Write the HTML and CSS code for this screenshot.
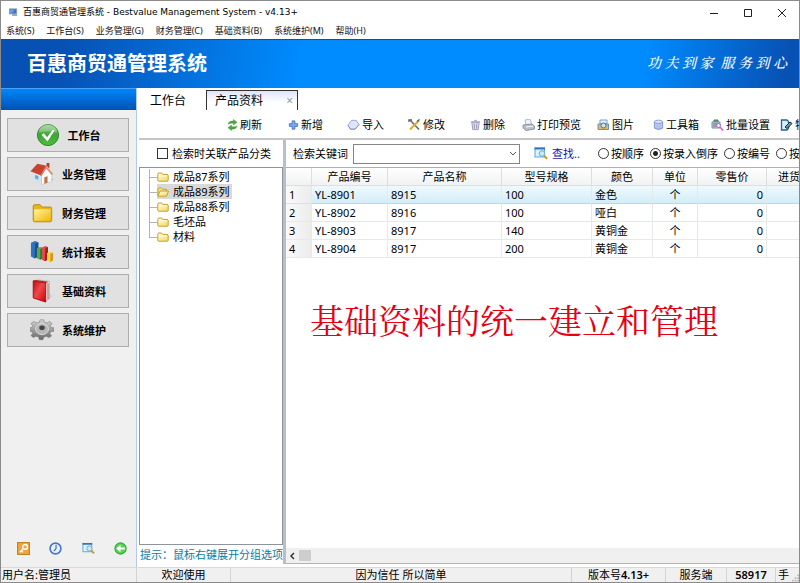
FILE: index.html
```html
<!DOCTYPE html>
<html lang="zh-CN">
<head>
<meta charset="utf-8">
<title>百惠商贸通管理系统</title>
<link rel="stylesheet" href="styles.css">
</head>
<body>
<svg class="defs" width="0" height="0" aria-hidden="true">
  <defs>
    <linearGradient id="yellow" x1="0" y1="0" x2="1" y2="1"><stop offset="0" stop-color="#fff2a0"/><stop offset="1" stop-color="#f2b705"/></linearGradient>
    <linearGradient id="pale" x1="0" y1="0" x2="1" y2="1"><stop offset="0" stop-color="#fffbe0"/><stop offset="1" stop-color="#f5d95c"/></linearGradient>
    <linearGradient id="green" x1="0" y1="0" x2="0" y2="1"><stop offset="0" stop-color="#8fce86"/><stop offset=".5" stop-color="#3fa535"/><stop offset="1" stop-color="#4cc03c"/></linearGradient>
    <linearGradient id="red" x1="0" y1="0" x2="1" y2="1"><stop offset="0" stop-color="#b80f12"/><stop offset=".45" stop-color="#f0484a"/><stop offset="1" stop-color="#cc0006"/></linearGradient>
    <linearGradient id="steel" x1="0" y1="0" x2="0" y2="1"><stop offset="0" stop-color="#d2d2d2"/><stop offset="1" stop-color="#686868"/></linearGradient>
    <symbol id="folder" viewBox="0 0 12 10"><path d="M.8 8.2V2.2Q.8 1 2 1h2.6l1.2 1.4H10q1.2 0 1.2 1.2v4.6q0 1-1 1H1.800q-1 0-1-1z" fill="url(#pale)" stroke="#c4a02c"/><path d="M2 4h8" stroke="#fffbd5"/></symbol>
    <symbol id="folder-open" viewBox="0 0 12 10"><path d="M1 9V2.200Q1 1 2 1h2.400l1.200 1.200H9.500V4" fill="#f9e48c" stroke="#c4a02c"/><path d="M.8 9.200 3 4h8.500L9.600 9.200z" fill="url(#pale)" stroke="#c4a02c"/></symbol>
    <symbol id="finder" viewBox="0 0 14 13"><rect x="1" y="1" width="9.500" height="9" fill="#d9f3fb" stroke="#5fa6d4"/><path d="M.5 1.500h10.500" stroke="#3476bd" stroke-width="2"/><circle cx="8" cy="6.500" r="2.800" fill="#c5ebf6" stroke="#78a9c4"/><path d="m10.200 8.800 2.800 3" stroke="#c9973b" stroke-width="2"/></symbol>
  </defs>
</svg>
<div class="window">
  <header class="titlebar">
    <svg class="app-icon" viewBox="0 0 10 9"><rect x=".5" y=".5" width="8" height="5.500" fill="#3f73c4" stroke="#7f9cc9"/><path d="M1 2 5 1v3L1 5z" fill="#71a0e8"/><path d="M3 8h6.500l-1-1.500H4z" fill="#87919e"/></svg>
    <h1>百惠商贸通管理系统 - Bestvalue Management System - v4.13+</h1>
    <div class="controls">
      <button type="button" aria-label="最小化"><svg viewBox="0 0 10 10"><path d="M1 5.500h8"/></svg></button>
      <button type="button" aria-label="最大化"><svg viewBox="0 0 10 10"><path d="M1.500 1.500h7v7h-7z"/></svg></button>
      <button type="button" aria-label="关闭"><svg viewBox="0 0 10 10"><path d="m1 1 8 8M9 1 1 9"/></svg></button>
    </div>
  </header>
  <nav class="menu">
    <a href="#">系统(S)</a><a href="#">工作台(S)</a><a href="#">业务管理(G)</a><a href="#">财务管理(C)</a><a href="#">基础资料(B)</a><a href="#">系统维护(M)</a><a href="#">帮助(H)</a>
  </nav>
  <div class="banner">
    <strong>百惠商贸通管理系统</strong>
    <em>功 夫 到 家 &nbsp;服 务 到 心</em>
  </div>
  <div class="main">
    <aside class="sidebar">
      <div class="side-head"></div>
      <div class="side-nav">
        <button type="button"><svg viewBox="0 0 26 26"><circle cx="13" cy="13" r="11.500" fill="url(#green)" stroke="#2c8429"/><path d="M3 10a10 9 0 0 1 20 0q-9-2-20 0z" fill="#fff" opacity=".25"/><path d="m6 13 2.500-2 3.500 4.500L18.500 7l1.500 1-7.500 12z" fill="#fff"/></svg>工作台</button>
        <button type="button"><svg viewBox="0 0 26 26"><path d="M5 20q9 6 20-1l-6-4z" fill="#7cb75a"/><path d="m3 10 9.500 4v10.500L3 20z" fill="#d3e3ef"/><path d="m12.500 14 5.500-8 5.500 7v8l-11 3.500z" fill="#f6fafd" stroke="#adc0ce" stroke-width=".6"/><path d="M.5 10 8 2l10 2-6 10.500z" fill="#c8422f"/><path d="m17.500 4 7.500 9-1.500 1.200L17.500 7l-5 8.500-1.300-1z" fill="#e98363"/><path d="M18 4V1h3v6z" fill="#a93d2e"/><path d="m15.500 16.500 3.500-1v7l-3.500 1z" fill="#c57044"/><path d="m5.500 14 3.500 1.200v4L5.500 18z" fill="#6fa6ce"/></svg>业务管理</button>
        <button type="button"><svg viewBox="0 0 26 26"><path d="M3.500 21V5.500q0-1.500 1.500-1.500h6l2 2.500h9q1.500 0 1.500 1.500v13q0 1.500-1.500 1.500H5q-1.500 0-1.500-1.500z" fill="#e5b616" stroke="#b98a12"/><path d="M4.500 9h18v12.500h-18z" fill="url(#yellow)"/></svg>财务管理</button>
        <button type="button"><svg viewBox="0 0 26 26"><path d="M1 3 5.500 1 9 2.500V18l-4 2-4-2z" fill="#2f73bd"/><path d="M5.500 4 9 2.500V18l-4 2z" fill="#174f94"/><path d="m7.500 9 3.500-1.500 3 1V20l-3 1.500L7.500 20z" fill="#55aa46"/><path d="m11 10 3-1.500V20l-3 1.500z" fill="#2b7d31"/><path d="m13 8 3.500-1.500 3 1V21L16 23l-3-1.500z" fill="#df4d49"/><path d="m16.500 9 3-1.500V21L16 23z" fill="#a91e25"/><path d="m18.500 14 3.500-1.500 3 1.200V22L21.500 24l-3-1.500z" fill="#fbd63c"/><path d="m22 15 3-1.300V22l-3 2z" fill="#d99714"/></svg>统计报表</button>
        <button type="button"><svg viewBox="0 0 26 26"><path d="m17 25 7-6-3-4z" fill="#d0d0d0"/><path d="m4 2 4-1 13 1.500V21l-4 3z" fill="#eee" stroke="#999" stroke-width=".6"/><path d="m3.500 2 13.500 2.500V25L3.500 20.500z" fill="url(#red)" stroke="#a30b0d"/><path d="m3.500 2 3-1L20 3l-3 1.500z" fill="#c41c20"/><path d="M19.500 4.500V22" stroke="#a5504d"/></svg>基础资料</button>
        <button type="button"><svg viewBox="0 0 26 26"><path d="m10 4 1-3 4 0 .5 3 3 .8L21 3l3 2.500-2 2.500 1 2 3 .5v4l-3.500.5-1 2.500 2 2.500-3 2-3-1.500-2.500 1-1 3h-4l-.5-3-3-1-3 1.500-2.500-2.500 2-2.500-1-2-3-.5v-4l3-.5 1-2-2-2.500 3-2.500 3 1.500z" transform="matrix(1 0 0 .92 0 1)" fill="url(#steel)" stroke="#777" stroke-width=".6"/><ellipse cx="13" cy="12" rx="7" ry="6" fill="#b5b5b5" stroke="#dedede"/><ellipse cx="13" cy="10.500" rx="3" ry="2.500" fill="#444"/></svg>系统维护</button>
      </div>
      <div class="side-tools">
        <button type="button" aria-label="密钥"><svg viewBox="0 0 12 12"><rect x=".5" y=".5" width="11" height="11" fill="#eda63b" stroke="#c58221"/><circle cx="7.500" cy="4.500" r="2.200" fill="none" stroke="#fff" stroke-width="1.300"/><path d="M6 6 2.500 9.500M4 8l1.500 1.500" stroke="#fff" stroke-width="1.300"/></svg></button>
        <button type="button" aria-label="时钟"><svg viewBox="0 0 12 12"><circle cx="6" cy="6" r="5" fill="#e9f2ff" stroke="#4778c7" stroke-width="1.500"/><path d="M6.500 2.500V6L4.500 8.500" fill="none" stroke="#2e64bb"/></svg></button>
        <button type="button" aria-label="查找"><svg viewBox="0 0 14 13"><use href="#finder"/></svg></button>
        <button type="button" aria-label="返回"><svg viewBox="0 0 12 12"><circle cx="6" cy="6" r="5.200" fill="#5bd05b" stroke="#2fae39"/><path d="m2 6 4-3.500V5h4v2H6v2.500z" fill="#fff"/></svg></button>
      </div>
    </aside>
    <section class="content">
      <div class="tabs">
        <button type="button" class="tab">工作台</button>
        <div class="tab active"><button type="button">产品资料</button><button type="button" class="close" aria-label="关闭标签">×</button></div>
      </div>
      <div class="toolbar">
        <button type="button"><svg viewBox="0 0 12 12"><path d="M1 5q1-3.500 5-3.500h1V0l4 3-4 3V4H5.500Q3 4 1 5zM11 7q-1 3.500-5 3.500H5V12L1 9l4-3v2h1.500Q9 8 11 7z" fill="#45ad38" stroke="#2f8d2b" stroke-width=".4"/></svg>刷新</button>
        <button type="button"><svg viewBox="0 0 12 12"><path d="M4.500 1.500h3v3h3v3h-3v3h-3v-3h-3v-3h3z" fill="#79a9ed" stroke="#4579c8"/></svg>新增</button>
        <button type="button"><svg class="wide" viewBox="0 0 14 12"><path d="m1 6 4-5h5l3 4.500-4.500 5h-5z" fill="#dfe5fb" stroke="#9aa5d5"/><path d="m1 6.500 3 4h5l4-5" fill="none" stroke="#8992c1"/></svg>导入</button>
        <button type="button"><svg class="wide" viewBox="0 0 13 12"><path d="m2 1 9 9.500" stroke="#67736f" stroke-width="1.700"/><path d="m11 1.500-9 9" stroke="#e2a736" stroke-width="2"/><path d="M1 3V1h3M9 2.500l2.500-2" fill="none" stroke="#596363" stroke-width="1.400"/></svg>修改</button>
        <button type="button"><svg viewBox="0 0 12 12"><path d="M2 3h8l-1 8H3z" fill="#d9d9ed" stroke="#9797b6"/><path d="M1 2.500h10M4.500 1h3M4.500 4.500 5 10M7.500 4.500 7 10" stroke="#9c9cbc"/></svg>删除</button>
        <button type="button"><svg class="wide" viewBox="0 0 13 12"><path d="m4 6-1-5 5-1 2 6z" fill="#e9f2ff" stroke="#90a6bd" stroke-width=".7"/><path d="m1 6 9-1 2.500 2v3L4 11.500 1 9z" fill="#b9bfca" stroke="#7f8591" stroke-width=".8"/><path d="m4 8 7-.8" stroke="#f7f7f7"/></svg>打印预览</button>
        <button type="button"><svg class="wide" viewBox="0 0 13 12"><path d="M3 1h7v4H3z" fill="#e4eefc" stroke="#7a9dcf"/><path d="M1 5h10.500v5.500H1z" fill="#e8b758" stroke="#668fc8"/><circle cx="6.500" cy="6.500" r="2.500" fill="#bfe7fa" stroke="#357bbb"/></svg>图片</button>
        <button type="button"><svg viewBox="0 0 12 12"><path d="M1.500 2.500v7q4.500 3 9 0v-7" fill="#a7b7f2" stroke="#8092d4"/><ellipse cx="6" cy="2.500" rx="4.500" ry="1.800" fill="#dfe6ff" stroke="#8092d4"/><path d="M2 5q4 2 8 0M2 7.500q4 2 8 0" fill="none" stroke="#c9d3fb"/></svg>工具箱</button>
        <button type="button"><svg class="wide" viewBox="0 0 13 12"><path d="M1 3h8v6H1z" fill="#bfd1da" stroke="#76929f"/><path d="M3 3V1h4v2" fill="#599f74" stroke="#557f66"/><path d="M2 5h6M2 7h6" stroke="#668"/><circle cx="7.500" cy="6.500" r="2" fill="#f7e9ff" stroke="#a56cc6"/><path d="m9 8 3 3.500" stroke="#e06bb5" stroke-width="1.800"/></svg>批量设置</button>
        <button type="button"><svg class="wide" viewBox="0 0 13 12"><path d="M1.500 1H7q2 1 2 5t-2 5H1.500z" fill="#d5f0ff" stroke="#256092" stroke-width="1.300"/><path d="m5 8 5-5 2 1.500-5 5z" fill="#69a1b1" stroke="#222"/></svg>特性</button>
      </div>
      <div class="split">
        <section class="category">
          <label class="link-check"><input type="checkbox">检索时关联产品分类</label>
          <ul class="tree">
            <li><button type="button"><svg viewBox="0 0 12 10"><use href="#folder"/></svg><span>成品87系列</span></button></li>
            <li><button type="button" class="chosen"><svg viewBox="0 0 12 10"><use href="#folder-open"/></svg><span>成品89系列</span></button></li>
            <li><button type="button"><svg viewBox="0 0 12 10"><use href="#folder"/></svg><span>成品88系列</span></button></li>
            <li><button type="button"><svg viewBox="0 0 12 10"><use href="#folder"/></svg><span>毛坯品</span></button></li>
            <li><button type="button"><svg viewBox="0 0 12 10"><use href="#folder"/></svg><span>材料</span></button></li>
          </ul>
          <p class="hint">提示：鼠标右键展开分组选项</p>
        </section>
        <section class="records">
          <form class="search">
            <label for="keyword">检索关键词</label>
            <div class="combo"><select id="keyword"><option></option></select><svg viewBox="0 0 8 6"><path d="m1 1 3 3 3-3"/></svg></div>
            <button type="button" class="find"><svg viewBox="0 0 14 13"><use href="#finder"/></svg>查找..</button>
            <div class="sorts">
              <label><input type="radio" name="sort">按顺序</label>
              <label><input type="radio" name="sort" checked>按录入倒序</label>
              <label><input type="radio" name="sort">按编号</label>
              <label><input type="radio" name="sort">按名称</label>
            </div>
          </form>
          <div class="grid">
            <table>
              <colgroup><col class="c-row"><col class="c-code"><col class="c-name"><col class="c-spec"><col class="c-color"><col class="c-unit"><col class="c-price"><col class="c-cost"></colgroup>
              <thead><tr><th></th><th>产品编号</th><th>产品名称</th><th>型号规格</th><th>颜色</th><th>单位</th><th>零售价</th><th>进货价</th></tr></thead>
              <tbody>
                <tr class="selected"><th>1</th><td>YL-8901</td><td>8915</td><td>100</td><td>金色</td><td class="mid">个</td><td class="num">0</td><td></td></tr>
                <tr><th>2</th><td>YL-8902</td><td>8916</td><td>100</td><td>哑白</td><td class="mid">个</td><td class="num">0</td><td></td></tr>
                <tr><th>3</th><td>YL-8903</td><td>8917</td><td>140</td><td>黄铜金</td><td class="mid">个</td><td class="num">0</td><td></td></tr>
                <tr><th>4</th><td>YL-8904</td><td>8917</td><td>200</td><td>黄铜金</td><td class="mid">个</td><td class="num">0</td><td></td></tr>
              </tbody>
            </table>
            <p class="caption">基础资料的统一建立和管理</p>
          </div>
          <div class="hscroll"><svg viewBox="0 0 6 8"><path d="M5 1 2 4l3 3"/></svg><span class="thumb"></span></div>
        </section>
      </div>
    </section>
  </div>
  <footer class="status">
    <span class="user">用户名:管理员</span><span>欢迎使用</span><span>因为信任 所以简单</span><span>版本号<b>4.13+</b></span><span>服务端</span><span><b>58917</b></span><span>手<svg viewBox="0 0 8 8"><path d="M6 0h2v2H6zM3 3h2v2H3zM6 3h2v2H6zM0 6h2v2H0zM3 6h2v2H3zM6 6h2v2H6z"/></svg></span>
  </footer>
</div>
</body>
</html>
```
FILE: styles.css
```css
* { box-sizing: border-box; }

body {
  margin: 0;
  height: 100vh;
  overflow: hidden;
  background: #fff;
  color: #000;
  font: 11px/15px "Noto Sans", "Noto Sans CJK SC", sans-serif;
}

button, select, input { font: inherit; color: inherit; margin: 0; }
button { border: 0; padding: 0; background: none; white-space: nowrap; }
svg { flex: none; display: block; }
p, h1, ul { margin: 0; padding: 0; }
.defs { position: absolute; }

.window {
  display: flex;
  flex-direction: column;
  height: 100vh;
  border: 1px solid #8a8a8a;
}

/* Title and menu */
.titlebar {
  display: flex;
  align-items: center;
  height: 23px;
  padding-left: 8px;
  gap: 5px;
}
.app-icon { width: 9px; height: 9px; }
.titlebar h1 { font: 400 9px/15px "DejaVu Sans", "Noto Sans CJK SC", sans-serif; white-space: nowrap; }
.controls { display: flex; margin-left: auto; }
.controls button { width: 34px; height: 22px; display: grid; place-items: center; }
.controls svg { width: 10px; height: 10px; fill: none; stroke: #222; }

.menu {
  display: flex;
  gap: 12px;
  height: 15px;
  padding-left: 5px;
  font-size: 9px;
  line-height: 14px;
  white-space: nowrap;
}
.menu a { color: #111; text-decoration: none; }

.banner {
  display: flex;
  align-items: center;
  justify-content: space-between;
  height: 49px;
  padding: 0 12px 0 26px;
  border-top: 1px solid #0850b0;
  background: linear-gradient(100deg, #0751b4 0, #0751b4 8%, #008cff 38%, #008cff 80%, #0751b4 98%);
  color: #fff;
}
.banner strong { font-size: 20px; line-height: 28px; }
.banner em { font: italic 500 14px/20px "Liberation Serif", "Noto Serif CJK SC", "Noto Sans CJK SC", serif; }

/* Sidebar */
.main { flex: 1; display: flex; min-height: 0; }
.sidebar {
  display: flex;
  flex-direction: column;
  width: 136px;
  flex: none;
  background: #f0f0f0;
  border-right: 1px solid #b3cbe3;
}
.side-head { height: 22px; background: linear-gradient(#0086fa, #0052b4); border-top: 1px solid #48a5ff; }
.side-nav { display: grid; gap: 5px; padding: 8px 7px 0 6px; }
.side-nav button {
  display: flex;
  align-items: center;
  justify-content: center;
  gap: 8px;
  height: 34px;
  border: 1px solid #adadad;
  background: #e1e1e1;
  font-weight: 700;
}
.side-nav svg { width: 24px; height: 24px; }
.side-tools { display: flex; justify-content: space-between; margin-top: auto; padding: 0 9px 12px 16px; }
.side-tools svg { width: 13px; height: 13px; }

/* Tabs and toolbar */
.content { flex: 1; min-width: 0; display: flex; flex-direction: column; }
.tabs { display: flex; height: 23px; padding: 2px 0 0 13px; font-size: 12px; }
.tab { display: flex; align-items: center; height: 20px; margin-right: 20px; }
.tab.active {
  width: 92px;
  justify-content: space-between;
  padding: 0 4px 0 8px;
  border: 1px solid #333;
  border-bottom: 0;
  background: linear-gradient(#dfe3f7, #fff 60%);
}
.close { color: #999; }
.toolbar {
  display: grid;
  grid-template-columns: 61px 59px 61px 62px 52px 75px 56px 58px 69px 60px;
  height: 27px;
  padding-left: 90px;
  overflow: hidden;
}
.toolbar button { display: flex; align-items: center; gap: 2px; }
.toolbar svg { width: 11px; height: 12px; }
.toolbar svg.wide { width: 13px; }

/* Category pane */
.split { flex: 1; display: flex; min-height: 0; margin-left: 2px; border-top: 2px solid #c6c6c6; }
.category { width: 144px; flex: none; display: flex; flex-direction: column; }
.link-check { display: flex; align-items: center; gap: 4px; height: 27px; padding-left: 18px; white-space: nowrap; }
input { appearance: none; flex: none; width: 11px; height: 11px; border: 1px solid #333; background: #fff; }
.tree { flex: 1; list-style: none; padding: 1px 0 0 9px; border: 1px solid #8d949c; }
.tree li { position: relative; height: 15px; padding-left: 8px; }
.tree li::before { content: ""; position: absolute; left: 0; top: 0; width: 8px; height: 8px; border: solid #b4b4b4; border-width: 0 0 1px 1px; }
.tree li:not(:last-child)::after { content: ""; position: absolute; left: 0; top: 8px; height: 7px; border-left: 1px solid #b4b4b4; }
.tree button { display: flex; align-items: center; height: 15px; gap: 4px; padding-right: 2px; }
.tree .chosen { background: #d9d9d9; }
.tree svg { width: 12px; height: 10px; }
.hint { height: 22px; padding-left: 1px; line-height: 19px; color: #087aa5; white-space: nowrap; }

/* Records */
.records {
  flex: 1;
  min-width: 0;
  display: flex;
  flex-direction: column;
  margin-bottom: 3px;
  border-left: 3px solid #b6bfca;
  border-bottom: 1px solid #a8b8b8;
}
.search { display: flex; align-items: center; height: 27px; padding-left: 7px; overflow: hidden; white-space: nowrap; }
.combo { position: relative; width: 167px; margin: 0 14px 0 5px; flex: none; }
.combo select { display: block; appearance: none; width: 100%; height: 20px; border: 1px solid #858585; border-radius: 0; background: #fff; }
.combo svg { position: absolute; right: 3px; top: 7px; width: 8px; height: 6px; fill: none; stroke: #555; }
.find { display: flex; align-items: center; gap: 4px; color: #1616a8; }
.find svg { width: 14px; height: 13px; }
.sorts { display: flex; gap: 6px; margin-left: 18px; }
.sorts label { display: flex; align-items: center; gap: 2px; }
.sorts input { border-radius: 50%; }
.sorts input:checked { background: radial-gradient(circle, #222 0 2px, #fff 3px); }

.grid { flex: 1; min-height: 0; overflow: hidden; border-top: 1px solid #a3b5b8; }
table { table-layout: fixed; width: 537px; border-collapse: separate; border-spacing: 0; }
.c-row { width: 26px; }
.c-code { width: 76px; }
.c-name { width: 114px; }
.c-spec { width: 90px; }
.c-color { width: 61px; }
.c-unit { width: 45px; }
.c-price { width: 69px; }
.c-cost { width: 56px; }
th, td {
  height: 18px;
  padding: 0 3px;
  border: solid #e6e9ea;
  border-width: 0 1px 1px 0;
  font-weight: 400;
  line-height: 17px;
  text-align: left;
  white-space: nowrap;
}
thead th { text-align: center; background: linear-gradient(#fff, #f1f2f3); border-color: #dcdfe2; }
tbody th { background: linear-gradient(90deg, #fafafa, #ececec); }
.selected td { background: linear-gradient(#eff9fe, #d3edf8); border-bottom-color: #b5dbe9; }
.selected th { border-bottom-color: #dcdfe2; }
.mid { text-align: center; }
.num { text-align: right; }
.caption {
  margin: 38px 0 0 24px;
  color: #e60012;
  font: 400 34px/48px "Noto Serif CJK SC", "Noto Sans CJK SC", serif;
  white-space: nowrap;
}
.hscroll { display: flex; align-items: center; height: 15px; padding-left: 3px; gap: 4px; background: #f0f0f0; }
.hscroll svg { width: 6px; height: 8px; fill: none; stroke: #333; stroke-width: 1.5; }
.thumb { width: 12px; height: 11px; background: #cdcdcd; }

/* Status bar */
.status {
  display: grid;
  grid-template-columns: 136px 94px 1fr 94px 61px 49px 23px;
  height: 15px;
  background: #f0f0f0;
  border-top: 1px solid #d9d9d9;
  line-height: 14px;
  text-align: center;
  white-space: nowrap;
}
.status span { border-right: 1px solid #d3d3d3; }
.status .user { text-align: left; padding-left: 1px; }
.status span:last-child { display: flex; justify-content: space-between; align-items: flex-end; padding-left: 2px; border: 0; }
.status b { font-weight: 600; }
.status svg { width: 7px; height: 8px; fill: #bbb; }
```
